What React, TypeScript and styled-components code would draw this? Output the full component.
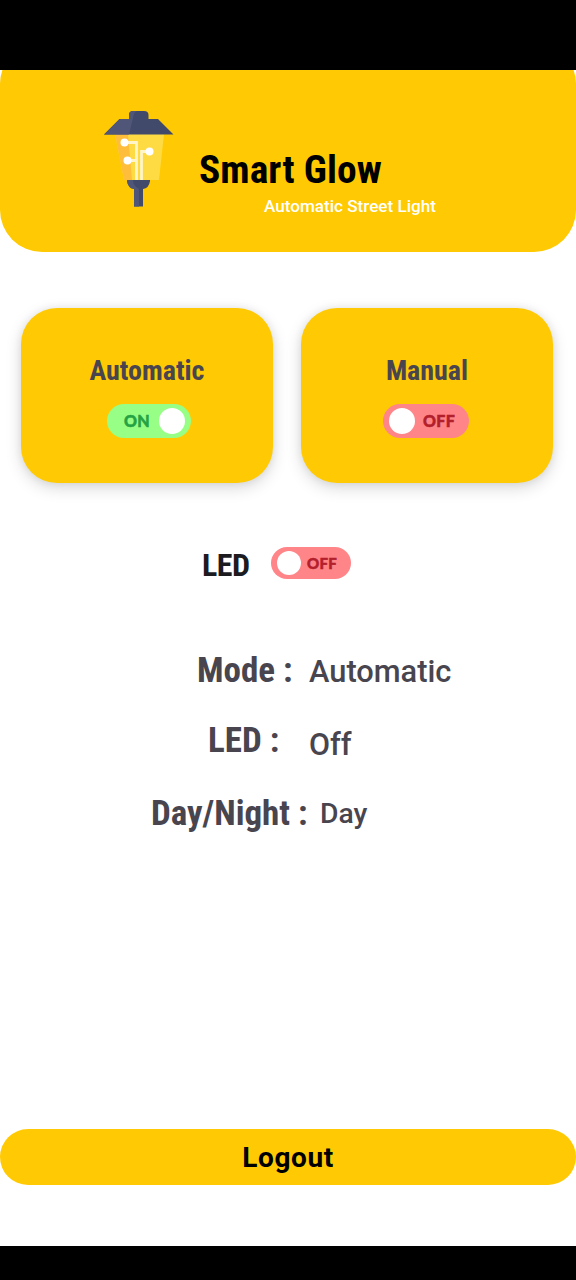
import React from "react";
import styled, { createGlobalStyle } from "styled-components";

const Global = createGlobalStyle`
  *, *::before, *::after { box-sizing: border-box; }
  body { margin: 0; background: #fff; font-family: Roboto, "Liberation Sans", sans-serif; }
`;

const Screen = styled.div`
  width: 576px;
  height: 1280px;
  display: flex;
  flex-direction: column;
  background: #fff;
  overflow: hidden;
`;

const SystemBar = styled.div<{ $height: number }>`
  height: ${(p) => p.$height}px;
  flex: none;
  background: #000;
`;

const Content = styled.main`
  flex: 1;
  display: flex;
  flex-direction: column;
  overflow: hidden;
`;

const Header = styled.header`
  flex: none;
  display: flex;
  height: 210px;
  margin-top: -28px;
  padding: 66px 0 0 100px;
  border-radius: 42px;
  background: #ffca03;
`;

const Titles = styled.div`
  display: flex;
  flex-direction: column;
  padding: 38px 0 0 22px;
`;

const Condensed = styled.span<{
  $size: number;
  $color?: string;
  $spacing?: number;
  $stretch?: number;
}>`
  display: block;
  margin: 0;
  font-size: ${(p) => p.$size}px;
  line-height: 48px;
  font-weight: 700;
  font-stretch: ${(p) => p.$stretch ?? 75}%;
  letter-spacing: ${(p) => p.$spacing ?? 0}px;
  white-space: nowrap;
  color: ${(p) => p.$color ?? "#49454f"};
`;

const Subtitle = styled.span`
  padding-left: 65px;
  font-size: 17.1px;
  font-weight: 500;
  line-height: 24px;
  color: #fff;
  white-space: nowrap;
`;

const Cards = styled.section`
  display: flex;
  gap: 28px;
  padding: 56px 21px 0;
`;

const Card = styled.div`
  width: 252px;
  height: 175px;
  display: flex;
  flex-direction: column;
  align-items: center;
  padding-top: 39px;
  border-radius: 36px;
  background: #ffca03;
  box-shadow: 0 5px 16px rgba(0, 0, 0, 0.15), 0 0 8px rgba(0, 0, 0, 0.07);
`;

const ToggleSlot = styled.div<{ $shift?: number; $top: number }>`
  display: flex;
  margin-top: ${(p) => p.$top}px;
  margin-left: ${(p) => p.$shift ?? 0}px;
`;

const Track = styled.button<{ $on: boolean; $w: number; $h: number; $font: number }>`
  display: flex;
  align-items: center;
  justify-content: space-between;
  flex-direction: ${(p) => (p.$on ? "row-reverse" : "row")};
  width: ${(p) => p.$w}px;
  height: ${(p) => p.$h}px;
  padding: ${(p) => (p.$on ? "0 6px 0 17px" : "0 14px 0 6px")};
  border: 0;
  border-radius: 20px;
  background: ${(p) => (p.$on ? "#97ff86" : "#ff8589")};
  color: ${(p) => (p.$on ? "#25a244" : "#b3202c")};
  font: 900 ${(p) => p.$font}px Lato, sans-serif;
`;

const ToggleText = styled.span`
  padding-bottom: 1px;
  letter-spacing: 0.3px;
  -webkit-text-stroke: 0.5px currentColor;
`;

const Knob = styled.span<{ $size: number }>`
  width: ${(p) => p.$size}px;
  height: ${(p) => p.$size}px;
  border-radius: 50%;
  background: #fff;
`;

const LedRow = styled.section`
  display: flex;
  align-items: flex-start;
  padding: 58px 0 0 202px;
`;

const LedName = styled.div`
  width: 69px;
`;

const Status = styled.dl`
  display: flex;
  flex-direction: column;
  margin: 58px 0 0;
`;

const StatusRow = styled.div<{ $left: number; $height: number }>`
  display: flex;
  height: ${(p) => p.$height}px;
  padding-left: ${(p) => p.$left}px;
`;

const Term = styled.dt<{ $width: number }>`
  width: ${(p) => p.$width}px;
  flex: none;
`;

const Value = styled.dd<{ $size: number; $drop: number }>`
  margin: ${(p) => p.$drop}px 0 0;
  font-size: ${(p) => p.$size}px;
  font-weight: 480;
  line-height: 48px;
  color: #49454f;
`;

const Logout = styled.button`
  display: flex;
  justify-content: center;
  align-items: center;
  width: 100%;
  height: 56px;
  flex: none;
  margin: auto 0 61px;
  border: 0;
  padding: 2px 0 0;
  border-radius: 28px;
  background: #ffca03;
  font-family: inherit;
`;

function Lamp() {
  return (
    <svg width="77" height="104" viewBox="100 108 77 104" aria-hidden="true">
      <path d="M115 134H164L159 180H124Z" fill="#ffdb43" />
      <path d="M115 134H128L132 180H124Z" fill="#ffbd3c" />
      <path d="M125 142.500H136.500V180M128 160.500H136M150 151.500H141.500V180" fill="none" stroke="#fff5c8" strokeWidth="2.800" />
      <g fill="#fff">
        <circle cx="124.500" cy="142.500" r="4" />
        <circle cx="127.500" cy="160.500" r="4" />
        <circle cx="149.500" cy="151.500" r="4" />
      </g>
      <path d="M129 119V115Q129 111 133 111H144Q148.500 111 148.500 115V119H158L173.500 134.500H104L119.500 119Z" fill="#414a6b" />
      <path d="M129 119V115Q129 111 133 111H137Q134 112 133.500 116L129 134.500H104L119.500 119Z" fill="#4f5678" />
      <path d="M127 180H150V181Q149 188 143 189V206.500H134V189Q128 188 127 181Z" fill="#414a6b" />
      <path d="M127 180H133Q133 186 139 189V206.500H134V189Q128 188 127 181Z" fill="#4f5678" />
    </svg>
  );
}

type ToggleProps = { on?: boolean; w: number; h: number; knob: number; font: number };

function Toggle({ on = false, w, h, knob, font }: ToggleProps) {
  return (
    <Track type="button" role="switch" aria-checked={on} $on={on} $w={w} $h={h} $font={font}>
      <Knob $size={knob} />
      <ToggleText>{on ? "ON" : "OFF"}</ToggleText>
    </Track>
  );
}

const readings = [
  { term: "Mode :", value: "Automatic", left: 197, width: 112, height: 70, size: 30.8, drop: 1 },
  { term: "LED :", value: "Off", left: 208, width: 101, height: 73, size: 30.5, drop: 4 },
  { term: "Day/Night :", value: "Day", left: 151, width: 169, height: 48, size: 28.3, drop: 0 },
];

export default function App() {
  return (
    <Screen>
      <Global />
      <SystemBar $height={70} />
      <Content>
        <Header>
          <Lamp />
          <Titles>
            <Condensed as="h1" $size={39.5} $color="#000" $spacing={0.05}>Smart Glow</Condensed>
            <Subtitle>Automatic Street Light</Subtitle>
          </Titles>
        </Header>
        <Cards>
          <Card>
            <Condensed $size={28}>Automatic</Condensed>
            <ToggleSlot $top={9} $shift={4}>
              <Toggle on w={84} h={34} knob={26} font={16} />
            </ToggleSlot>
          </Card>
          <Card>
            <Condensed $size={28}>Manual</Condensed>
            <ToggleSlot $top={9} $shift={-2}>
              <Toggle w={86} h={34} knob={26} font={16} />
            </ToggleSlot>
          </Card>
        </Cards>
        <LedRow>
          <LedName>
            <Condensed $size={32} $color="#1c1b1f" $spacing={-0.5}>LED</Condensed>
          </LedName>
          <ToggleSlot $top={6}>
            <Toggle w={80} h={32} knob={24} font={15} />
          </ToggleSlot>
        </LedRow>
        <Status>
          {readings.map((r) => (
            <StatusRow key={r.term} $left={r.left} $height={r.height}>
              <Term $width={r.width}><Condensed $size={35}>{r.term}</Condensed></Term>
              <Value $size={r.size} $drop={r.drop}>{r.value}</Value>
            </StatusRow>
          ))}
        </Status>
        <Logout type="button">
          <Condensed $size={28} $color="#000" $stretch={95} $spacing={0.6}>Logout</Condensed>
        </Logout>
      </Content>
      <SystemBar $height={34} />
    </Screen>
  );
}
